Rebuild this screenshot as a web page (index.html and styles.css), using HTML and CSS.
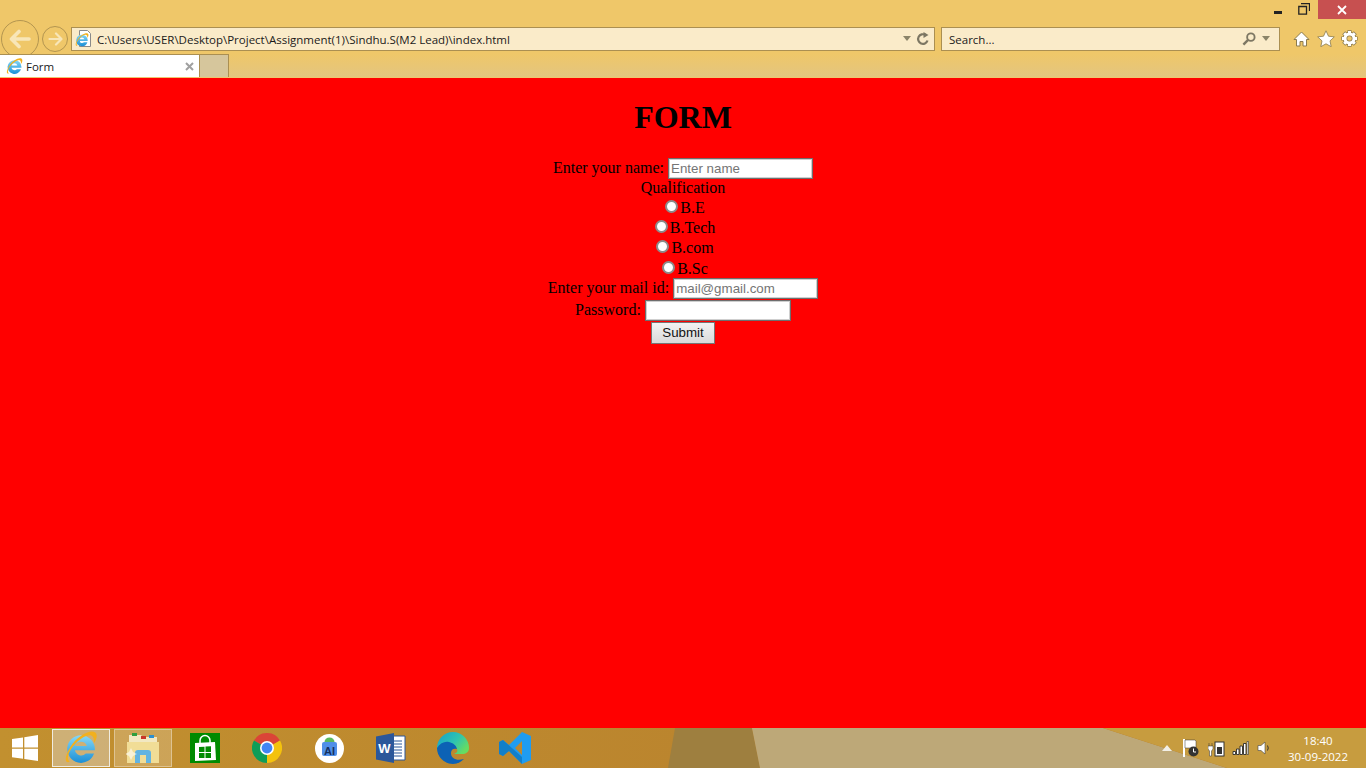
FILE: index.html
```html
<!DOCTYPE html>
<html lang="en">
<head>
    <meta charset="UTF-8">
    <meta name="viewport" content="width=device-width, initial-scale=1.0">
    <title>Form</title>
    <link rel="stylesheet" href="styles.css">
</head>
<body>
    <svg class="defs" width="0" height="0" aria-hidden="true">
        <defs>
            <linearGradient id="ie-blue" x1="0" y1="0" x2="0" y2="1">
                <stop offset="0" stop-color="#86d8f7"/>
                <stop offset="1" stop-color="#1c8fd6"/>
            </linearGradient>
            <symbol id="ie" viewBox="0 0 32 32">
                <path fill-rule="evenodd" d="M16 4a13 13 0 1 0 12.300 17.200h-7.800a6 6 0 0 1-10.200-3H29A13 13 0 0 0 16 4zM10.500 14a5.800 5.800 0 0 1 11 0z" fill="url(#ie-blue)"/>
                <path d="M5.500 29C0 31 .5 24 6 15 12 5 25-2 29.500 1.500 32 3.500 30.500 8.500 28 11.500 28.500 7 27.500 3.500 23.500 4 16.500 5 8.500 13 5 20 3.300 23.500 3 27 5.500 29z" fill="#f2b01e"/>
            </symbol>
        </defs>
    </svg>

    <div id="browser">
        <!-- IE toolbar -->
        <header id="chrome">
            <div class="title-bar">
                <svg class="win-min" width="10" height="10" viewBox="0 0 10 10"><rect x="1" y="7" width="8" height="3" fill="#222"/></svg>
                <svg class="win-restore" width="12" height="12" viewBox="0 0 12 12"><path d="M3 .5h8.500V8M.8 3.500h7.700v7.700H.8z" fill="none" stroke="#222" stroke-width="1.300"/></svg>
                <div class="win-close">
                    <svg width="10" height="10" viewBox="0 0 10 10"><path d="M1 1l8 8M9 1l-8 8" stroke="#fff" stroke-width="1.800"/></svg>
                </div>
            </div>

            <div class="nav-bar">
                <div class="nav-btn nav-back">
                    <svg width="22" height="20" viewBox="0 0 22 20"><path d="M10 2.500L2.500 10l7.500 7.500M3.500 10H20" fill="none" stroke="#f8e6b8" stroke-width="3.600" stroke-linejoin="round" stroke-linecap="round"/></svg>
                </div>
                <div class="nav-btn nav-forward">
                    <svg width="15" height="14" viewBox="0 0 15 14"><path d="M8 1.500L13.500 7 8 12.500M12.500 7H1.500" fill="none" stroke="#f8e6b8" stroke-width="2.200" stroke-linejoin="round" stroke-linecap="round"/></svg>
                </div>
                <div class="box address-box">
                    <svg class="page-icon" width="17" height="17" viewBox="0 0 17 17">
                        <path d="M4.500.5h8l3 3v13h-11z" fill="#fff" stroke="#8a8a8a"/>
                        <use href="#ie" x="0" y="3" width="14" height="14"/>
                    </svg>
                    <span class="box-text">C:\Users\USER\Desktop\Project\Assignment(1)\Sindhu.S(M2 Lead)\index.html</span>
                    <svg class="caret" width="8" height="5" viewBox="0 0 8 5"><path d="M0 0h8L4 5z" fill="#8b8469"/></svg>
                    <svg class="refresh" width="14" height="14" viewBox="0 0 14 14"><path d="M11.500 8.500A4.800 4.800 0 1 1 9.500 3" fill="none" stroke="#7d7763" stroke-width="2.200"/><path d="M7.500 0v6l5-3z" fill="#7d7763"/></svg>
                </div>
                <div class="box search-box">
                    <span class="box-text">Search...</span>
                    <svg class="lens" width="14" height="14" viewBox="0 0 15 15"><circle cx="9.500" cy="5.500" r="4" fill="none" stroke="#7d7763" stroke-width="2"/><path d="M6.500 8.500L1.500 13.500" stroke="#7d7763" stroke-width="2.600"/></svg>
                    <svg class="caret" width="8" height="5" viewBox="0 0 8 5"><path d="M0 0h8L4 5z" fill="#8b8469"/></svg>
                </div>
                <div class="tools">
                    <svg width="17" height="16" viewBox="0 0 17 16"><path d="M8.500 1L16 8.500h-2.500V15H10v-4.500H7V15H3.500V8.500H1z" fill="#fff" stroke="#8b7b4e"/></svg>
                    <svg width="18" height="17" viewBox="0 0 18 17"><path d="M9 .8l2.500 5.400 5.800.7-4.300 4 1.200 5.800L9 13.800l-5.200 2.900L5 10.900l-4.300-4 5.800-.7z" fill="#fff" stroke="#8b7b4e" stroke-width=".8"/></svg>
                    <svg width="17" height="17" viewBox="0 0 17 17"><path d="M8.500 .3v3.500M8.500 13.200v3.500M.3 8.500h3.500M13.200 8.500h3.500M2.700 2.700l2.500 2.500M11.800 11.800l2.500 2.500M14.300 2.700l-2.500 2.500M5.200 11.800l-2.500 2.500" stroke="#8b7b4e" stroke-width="4.200"/><circle cx="8.500" cy="8.500" r="4.500" fill="none" stroke="#8b7b4e" stroke-width="4.400"/><path d="M8.500 1v3M8.500 13v3M1 8.500h3M13 8.500h3M3.200 3.200l2 2M11.800 11.800l2 2M13.800 3.200l-2 2M5.200 11.800l-2 2" stroke="#fff" stroke-width="3"/><circle cx="8.500" cy="8.500" r="4.500" fill="none" stroke="#fff" stroke-width="3"/></svg>
                </div>
            </div>

            <div class="tab-bar">
                <div class="tab">
                    <svg class="tab-icon" width="17" height="17"><use href="#ie"/></svg>
                    <span class="tab-title">Form</span>
                    <svg class="tab-close" width="9" height="9" viewBox="0 0 9 9"><path d="M1 1l7 7M8 1L1 8" stroke="#a0a0a0" stroke-width="2"/></svg>
                </div>
                <div class="new-tab"></div>
            </div>
        </header>

        <!-- the page itself -->
        <main id="page">
            <h1>FORM</h1>
            <form class="signup">
                <div class="row"><label for="name">Enter your name:</label> <input type="text" id="name" placeholder="Enter name"></div>
                <div class="row">Qualification</div>
                <div class="row"><label><input type="radio" name="qual">B.E</label></div>
                <div class="row"><label><input type="radio" name="qual">B.Tech</label></div>
                <div class="row"><label><input type="radio" name="qual">B.com</label></div>
                <div class="row row-last-radio"><label><input type="radio" name="qual">B.Sc</label></div>
                <div class="row row-input"><label for="mail">Enter your mail id:</label> <input type="text" id="mail" placeholder="mail@gmail.com"></div>
                <div class="row row-input"><label for="password">Password:</label> <input type="password" id="password"></div>
                <div class="row row-submit"><button type="button">Submit</button></div>
            </form>
        </main>

        <!-- windows taskbar -->
        <footer id="taskbar">
            <svg class="wallpaper" viewBox="0 0 1366 40" preserveAspectRatio="none" aria-hidden="true">
                <defs>
                    <linearGradient id="bar-left" x1="0" y1="0" x2="1" y2="0">
                        <stop offset="0" stop-color="#c2902f"/>
                        <stop offset=".5" stop-color="#bb852e"/>
                        <stop offset="1" stop-color="#b0732d"/>
                    </linearGradient>
                </defs>
                <rect width="1366" height="40" fill="url(#bar-left)"/>
                <path d="M675 0H752L760 40H668z" fill="#9e7f3f"/>
                <path d="M752 0H1103L1227 40H760z" fill="#bda878"/>
                <path d="M1103 0H1366V40H1227z" fill="#c79c3f"/>
            </svg>
            <div class="start">
                <svg width="26" height="26" viewBox="0 0 26 26"><path d="M0 4l11-1.600v10H0zM12.300 2.200L26 0v12.400H12.300zM0 13.700h11v10L0 22.200zM12.300 13.700H26V26l-13.700-2z" fill="#fff"/></svg>
            </div>
            <div class="slot"><div class="task-btn active"><svg width="34" height="34"><use href="#ie"/></svg></div></div>
            <div class="slot"><div class="task-btn open">
                <svg width="34" height="32" viewBox="0 0 34 32">
                    <path d="M3 3h12l2 2h14v8H3z" fill="#f2e8c2"/>
                    <path d="M6 1h5v3H6z" fill="#2e9e3f"/><path d="M15 4h5v3h-5z" fill="#c9352a"/><path d="M23 3h5v3h-5z" fill="#2d8fd0"/>
                    <path d="M1 10h32v21H1z" fill="#f1dd96"/>
                    <path d="M9 31v-10q0-3 3-3h10q3 0 3 3v10h-5v-8h-6v8z" fill="#62b4e2"/>
                    <path d="M5 16l2 4 4 2-4 2-2 4-2-4-4-2 4-2z" fill="#fff" opacity=".6"/>
                </svg>
            </div></div>
            <div class="slot">
                <svg width="30" height="30" viewBox="0 0 30 30">
                    <rect width="30" height="30" fill="#008a00"/>
                    <path d="M5 10l20-1 1 18-21 1z" fill="#fff"/>
                    <path d="M10 10V7.500a5 5 0 0 1 10 0V10" fill="none" stroke="#fff" stroke-width="1.500"/>
                    <path d="M9 14l5.500-.3v5.300H9zM15.500 13.600l5.500-.3v5.700h-5.500zM9 20h5.500v5H9zM15.500 20H21v5h-5.500z" fill="#008a00"/>
                </svg>
            </div>
            <div class="slot">
                <svg width="30" height="30" viewBox="0 0 30 30">
                    <path d="M15 15L2 7.500A15 15 0 0 1 28 7.500z" fill="#db4437"/>
                    <path d="M15 15L28 7.500A15 15 0 0 1 15 30z" fill="#f4c20d"/>
                    <path d="M15 15v15A15 15 0 0 1 2 7.500z" fill="#0f9d58"/>
                    <circle cx="15" cy="15" r="7" fill="#fff"/><circle cx="15" cy="15" r="5.400" fill="#4285f4"/>
                </svg>
            </div>
            <div class="slot">
                <svg width="29" height="29" viewBox="0 0 29 29">
                    <circle cx="14.500" cy="14.500" r="14.500" fill="#fff"/>
                    <path d="M9.500 8a5 4.500 0 0 1 10 0z" fill="#5cb85c"/>
                    <rect x="7" y="8" width="15" height="14" rx="2" fill="#4f8fe8"/>
                    <text x="14.500" y="21" class="ai-mark">AI</text>
                </svg>
            </div>
            <div class="slot">
                <svg width="30" height="30" viewBox="0 0 30 30">
                    <path d="M13 3h16v24H13z" fill="#fff" stroke="#2b579a"/>
                    <path d="M17 8h9M17 11h9M17 14h9M17 17h9M17 20h9M17 23h9" stroke="#2b579a"/>
                    <path d="M0 3.500L18 0v30L0 26.500z" fill="#2b579a"/>
                    <text x="8.500" y="20" class="word-mark">W</text>
                </svg>
            </div>
            <div class="slot">
                <svg width="32" height="32" viewBox="0 0 32 32">
                    <defs>
                        <linearGradient id="edge-top" x1="0" y1="0" x2="1" y2=".6"><stop offset="0" stop-color="#14a0cf"/><stop offset=".6" stop-color="#2fc4b0"/><stop offset="1" stop-color="#66dc62"/></linearGradient>
                    </defs>
                    <path d="M16 0a16 16 0 0 1 16 16c0 4-3 6-7 6H17c3-1 4-3 3-5s-4-3-8-2-12 3-12 1A16 16 0 0 1 16 0z" fill="url(#edge-top)"/>
                    <path d="M0 16c3-5 8-7 12-6s7 3 8 7c-3-1-6 0-6 4 0 6 6 8 13 6-3 3-7 5-11 5A16 16 0 0 1 0 16z" fill="#0c62b5"/>
                </svg>
            </div>
            <div class="slot">
                <svg width="32" height="32" viewBox="0 0 32 32">
                    <path d="M23 0l9 4v24l-9 4-13-13-6 5-4-2v-12l4-2 6 5zM23 9l-7 7 7 7z" fill="#1f9cf0"/>
                    <path d="M0 10l4-2 19 17v7l-13-13-6 5-4-2z" fill="#0f76bd" opacity=".75"/>
                </svg>
            </div>

            <div class="tray">
                <svg class="tray-arrow" width="10" height="6" viewBox="0 0 10 6"><path d="M0 6l5-6 5 6z" fill="#f2efe6"/></svg>
                <svg width="18" height="18" viewBox="0 0 18 18"><path d="M2 0v18" stroke="#fff" stroke-width="2"/><path d="M3 1h10l1 1v7H3z" fill="#fff" stroke="#333" stroke-width=".5"/><circle cx="11.500" cy="12.500" r="5" fill="#333"/><path d="M11.500 9.500v3.500H14" fill="none" stroke="#fff"/></svg>
                <svg width="17" height="17" viewBox="0 0 17 17"><path d="M1 3v3M4 3v3M0 6h5v3l-1.500 2v5h-2v-5L0 9z" fill="#fff" stroke="#333" stroke-width=".5"/><rect x="7" y="2" width="9" height="14" fill="#fff" stroke="#333"/><rect x="9" y="7" width="5" height="7" fill="#333"/></svg>
                <svg width="17" height="14" viewBox="0 0 17 14"><path d="M1 10.500h2.500v3H1zM4.500 8h2.500v5.500H4.500zM8 5h2.500v8.500H8zM11.500 2.500H14v11h-2.500z" fill="#fff" stroke="#2a2a2a" stroke-width=".9"/><path d="M15 .5h1.500v13H15z" fill="#fff" stroke="#2a2a2a" stroke-width=".6"/></svg>
                <svg width="14" height="14" viewBox="0 0 14 14"><path d="M1 4.500h3L8 1v12L4 9.500H1z" fill="#fff" stroke="#444" stroke-width=".6"/><path d="M10.500 4.500q1.500 2.500 0 5" fill="none" stroke="#333"/></svg>
                <div class="clock"><span>18:40</span><span>30-09-2022</span></div>
            </div>
        </footer>
    </div>
</body>
</html>
```

FILE: styles.css
```css
html, body {
    margin: 0;
    height: 100%;
    overflow: hidden;
}

.defs {
    display: block;
    height: 0;
}

#browser {
    display: flex;
    flex-direction: column;
    height: 768px;
}

/* ---- toolbar ---- */
#chrome {
    height: 77px;
    flex-shrink: 0;
    background: linear-gradient(#efc769 0, #efc769 54px, #e3c57f 77px);
    border-bottom: 1px solid #efc56f;
    font-family: "Open Sans", sans-serif;
    font-size: 11.5px;
    color: #1a1a1a;
}

.title-bar {
    display: flex;
    justify-content: flex-end;
    align-items: flex-start;
    height: 18px;
}

.win-min {
    margin: 4px 15px 0 0;
}

.win-restore {
    margin: 3px 8px 0 0;
}

.win-close {
    width: 48px;
    height: 19px;
    background-color: #c75050;
    display: flex;
    align-items: center;
    justify-content: center;
}

.nav-bar {
    display: flex;
    align-items: center;
    height: 23px;
    padding: 9px 0 4px 1px;
}

.nav-btn {
    flex-shrink: 0;
    display: flex;
    align-items: center;
    justify-content: center;
    border-radius: 50%;
    border: 1px solid #b39550;
    box-sizing: border-box;
}

.nav-back {
    width: 38px;
    height: 38px;
}

.nav-forward {
    width: 26px;
    height: 26px;
    margin: 0 3px 0 3px;
}

.box {
    display: flex;
    align-items: center;
    box-sizing: border-box;
    height: 24px;
    background-color: #faebc9;
    border: 1px solid #ab8f51;
}

.address-box {
    width: 864px;
    padding: 0 3px 0 3px;
}

.search-box {
    width: 339px;
    margin-left: 6px;
    padding: 0 9px 0 7px;
}

.box-text {
    flex: 1;
    white-space: nowrap;
    padding-top: 2px;
}

.page-icon {
    margin-right: 5px;
    flex-shrink: 0;
}

.refresh {
    margin: 0 1px 0 5px;
}

.lens {
    margin-right: 6px;
}

.tools {
    display: flex;
    align-items: center;
    gap: 6.5px;
    margin-left: 13px;
}

.tab-bar {
    display: flex;
    height: 23px;
    position: relative;
}

.tab {
    width: 200px;
    height: 23px;
    box-sizing: border-box;
    background-color: #fff;
    border: 1px solid #ab8f51;
    border-left: 0;
    border-bottom: 0;
    display: flex;
    align-items: center;
    padding: 0 5px 0 6px;
}

.tab-title {
    flex: 1;
    margin-left: 3px;
}

.new-tab {
    width: 29px;
    box-sizing: border-box;
    background-color: #d6c69c;
    border: 1px solid #ab8f51;
    border-left: 0;
    border-bottom: 0;
}

/* ---- page ---- */
#page {
    flex: 1;
    background-color: #ff0000;
    color: #000;
    text-align: center;
    font-family: "Liberation Serif", serif;
    font-size: 16px;
    overflow: hidden;
}

h1 {
    font-size: 32px;
    line-height: 37px;
    margin: 21px 0 22px;
}

.row {
    height: 20px;
    line-height: 20px;
}

.row-last-radio {
    height: 19px;
    padding-top: 1px;
}

.row-input {
    height: 21px;
}

.row-input + .row-input {
    margin-top: 1px;
}

.row-submit {
    height: 22px;
    margin-top: 1px;
}

input[type="text"], input[type="password"] {
    box-sizing: border-box;
    width: 145px;
    height: 21px;
    padding: 0 2px;
    margin: 0;
    border: 1px solid #6e6e6e;
    box-shadow: inset 0 0 0 1px rgba(118, 118, 118, 0.35);
    background-color: #fff;
    font-family: "Liberation Sans", Arial, sans-serif;
    font-size: 13.33px;
    vertical-align: top;
}

input[type="password"] {
    width: 146px;
}

input::placeholder {
    color: #757575;
    opacity: 1;
}

input[type="radio"] {
    appearance: none;
    box-sizing: border-box;
    width: 13px;
    height: 13px;
    margin: 0 2px 0 4px;
    border: 2px solid #8c8c8c;
    border-radius: 50%;
    background-color: #fff;
    vertical-align: 0;
}

button {
    box-sizing: border-box;
    width: 64px;
    height: 22px;
    padding: 0 0 2px;
    border: 1px solid #767676;
    background: linear-gradient(#f2f2f2, #dadada);
    font-family: "Liberation Sans", Arial, sans-serif;
    font-size: 13.33px;
    color: #111;
    vertical-align: top;
}

/* ---- taskbar ---- */
#taskbar {
    position: relative;
    display: flex;
    align-items: center;
    height: 40px;
    flex-shrink: 0;
    font-family: "Open Sans", sans-serif;
}

.wallpaper {
    position: absolute;
    inset: 0;
    width: 100%;
    height: 100%;
}

.start, .slot, .tray {
    position: relative;
}

.start {
    width: 50px;
    display: flex;
    justify-content: center;
}

.slot {
    width: 62px;
    height: 40px;
    display: flex;
    align-items: center;
    justify-content: center;
}

.task-btn {
    width: 58px;
    height: 38px;
    box-sizing: border-box;
    display: flex;
    align-items: center;
    justify-content: center;
    background-color: rgba(255, 255, 255, 0.2);
    border: 1px solid rgba(255, 255, 255, 0.35);
}

.task-btn.active {
    background-color: rgba(225, 225, 225, 0.4);
    border-color: #f0ece0;
}

.ai-mark {
    font-family: "Liberation Sans", sans-serif;
    font-size: 11px;
    font-weight: bold;
    fill: #16305e;
    text-anchor: middle;
}

.word-mark {
    font-family: "Liberation Sans", sans-serif;
    font-size: 13px;
    font-weight: bold;
    fill: #fff;
    text-anchor: middle;
}

.tray {
    margin-left: auto;
    display: flex;
    align-items: center;
    gap: 7.5px;
}

.tray-arrow {
    margin-right: 2.5px;
}

.clock {
    display: flex;
    flex-direction: column;
    align-items: center;
    width: 60px;
    margin: 2px 18px 0 10px;
    font-size: 11.5px;
    line-height: 16px;
    color: #fff;
    white-space: nowrap;
}
```
